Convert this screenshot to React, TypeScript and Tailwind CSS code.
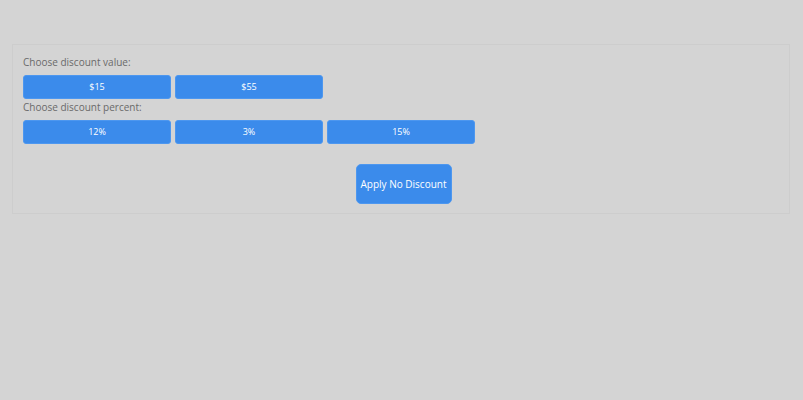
const values = ["$15", "$55"];
const percents = ["12%", "3%", "15%"];

function OptionButton({ label }: { label: string }) {
  return (
    <button className="h-[24px] w-[148px] rounded-[3px] border border-[#4d97ef] bg-[#3b8beb] text-[9px] text-white">
      {label}
    </button>
  );
}

export default function App() {
  return (
    <div
      className="h-[400px] w-full bg-[#d4d4d4] pt-[44px]"
      style={{ fontFamily: "'Open Sans', 'Liberation Sans', sans-serif" }}
    >
      <div className="mx-[12px] w-[778px] border border-[#cdcdcd] px-[10px] pt-[10px] pb-[9px]">
        <div className="text-[10px] leading-[14px] text-[#6a6a6a]">Choose discount value:</div>
        <div className="mt-[6px] flex gap-[4px]">
          {values.map((v) => (
            <OptionButton key={v} label={v} />
          ))}
        </div>
        <div className="mt-[1px] text-[10px] leading-[14px] text-[#6a6a6a]">Choose discount percent:</div>
        <div className="mt-[6px] flex gap-[4px]">
          {percents.map((p) => (
            <OptionButton key={p} label={p} />
          ))}
        </div>
        <div className="mt-[20px] flex justify-center">
          <button className="ml-[5px] h-[40px] w-[96px] rounded-[5px] border border-[#4d97ef] bg-[#3b8beb] text-[10px] text-white">
            Apply No Discount
          </button>
        </div>
      </div>
    </div>
  );
}
